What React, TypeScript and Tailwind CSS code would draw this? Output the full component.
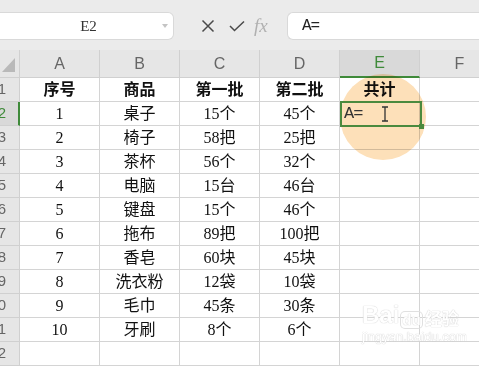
import React from "react";

const cols = ["A", "B", "C", "D", "E", "F"];
const data: string[][] = [
  ["序号", "商品", "第一批", "第二批", "共计", ""],
  ["1", "桌子", "15个", "45个", "", ""],
  ["2", "椅子", "58把", "25把", "", ""],
  ["3", "茶杯", "56个", "32个", "", ""],
  ["4", "电脑", "15台", "46台", "", ""],
  ["5", "键盘", "15个", "46个", "", ""],
  ["6", "拖布", "89把", "100把", "", ""],
  ["7", "香皂", "60块", "45块", "", ""],
  ["8", "洗衣粉", "12袋", "10袋", "", ""],
  ["9", "毛巾", "45条", "30条", "", ""],
  ["10", "牙刷", "8个", "6个", "", ""],
  ["", "", "", "", "", ""],
  ["", "", "", "", "", ""],
];

const serif = { fontFamily: '"Liberation Serif", "Noto Sans CJK SC", serif' };
const sans = { fontFamily: '"Liberation Sans", "Noto Sans", sans-serif' };
const mono = { fontFamily: '"Liberation Mono", "DejaVu Sans Mono", monospace' };

export default function App() {
  return (
    <div className="relative w-[479px] h-[366px] overflow-hidden bg-white" style={sans}>
      {/* top bar */}
      <div className="flex h-[50px] items-start bg-[#ebebeb] pt-[12px]">
        <div className="relative flex h-[28px] w-[174px] items-center justify-center rounded-r-[6px] border border-l-0 border-[#d9d9d9] bg-white text-[15px] text-[#333]" style={serif}>
          <span className="ml-[4px]">E2</span>
          <svg className="absolute right-[5px] top-[11px]" width="6" height="4" viewBox="0 0 6 4">
            <path d="M0 0 L6 0 L3 4 Z" fill="#c4c4c4" />
          </svg>
        </div>
        <div className="flex h-[28px] w-[113px] items-center">
          <svg className="ml-[27px]" width="14" height="14" viewBox="0 0 14 14">
            <path d="M1.5 1.5 L12.5 12.5 M12.5 1.5 L1.5 12.5" stroke="#4a4a4a" strokeWidth="1.5" fill="none" />
          </svg>
          <svg className="ml-[14px]" width="16" height="12" viewBox="0 0 16 12">
            <path d="M1 6 L5.5 10.5 L15 1.5" stroke="#4a4a4a" strokeWidth="1.5" fill="none" />
          </svg>
          <span className="ml-[9px] text-[19px] italic text-[#b0b0b0]" style={serif}>fx</span>
        </div>
        <div className="flex h-[28px] flex-1 items-center rounded-l-[6px] border border-r-0 border-[#d9d9d9] bg-white pl-[14px] text-[16px] text-[#222]" style={mono}>
          <span className="tracking-[-1px]">A=</span>
        </div>
      </div>

      {/* column header */}
      <div className="grid h-[28px] grid-cols-[20px_80px_80px_80px_80px_80px_80px] bg-[#e6e6e6]">
        <div className="relative border-r border-b border-[#d0d0d0]">
          <svg className="absolute left-[2px] top-[8px]" width="14" height="14" viewBox="0 0 14 14">
            <path d="M13 0 L13 14 L0 14 Z" fill="#b9b9b9" />
          </svg>
        </div>
        {cols.map((c) => (
          <div
            key={c}
            className={
              c === "E"
                ? "flex items-center justify-center border-r border-b-2 border-r-[#d0d0d0] border-b-[#3f8a3a] bg-[#d9d9d9] text-[16px] text-[#3f8a3a]"
                : "flex items-center justify-center border-r border-b border-[#d0d0d0] text-[16px] text-[#666]"
            }
          >
            {c}
          </div>
        ))}
      </div>

      {/* rows */}
      <div className="grid grid-cols-[20px_80px_80px_80px_80px_80px_80px]">
        {data.map((row, ri) => (
          <React.Fragment key={ri}>
            <div
              className={
                ri === 1
                  ? "flex h-[24px] items-center justify-end overflow-hidden border-b border-r-2 border-b-[#d0d0d0] border-r-[#3f8a3a] bg-[#d9d9d9] pr-[12px] text-[15px] text-[#3f8a3a]"
                  : "flex h-[24px] items-center justify-end overflow-hidden border-b border-r border-[#d0d0d0] bg-[#e6e6e6] pr-[13px] text-[15px] text-[#666]"
              }
            >
              <span className="whitespace-nowrap">{ri + 1}</span>
            </div>
            {row.map((v, ci) => (
              <div
                key={ci}
                className={
                  "flex h-[24px] items-center justify-center border-r border-b border-[#d4d4d4] text-[16px] text-[#111] " +
                  (ri === 0 ? "font-bold" : "")
                }
                style={serif}
              >
                {v}
              </div>
            ))}
          </React.Fragment>
        ))}
      </div>

      {/* highlight circle */}
      <div className="pointer-events-none absolute left-[340px] top-[74px] h-[86px] w-[86px] rounded-full bg-[#fde0b9] mix-blend-multiply" />

      {/* selected cell */}
      <div className="pointer-events-none absolute left-[340px] top-[101px] h-[26px] w-[82px] border-2 border-[#4b8a3e]">
        <span className="absolute left-[2px] top-[1px] text-[17px] leading-[20px] tracking-[-1px] text-[#333]" style={mono}>A=</span>
        <svg className="absolute left-[39px] top-[3px]" width="8" height="16" viewBox="0 0 8 16">
          <path d="M1 1 L7 1 M4 1 L4 15 M1 15 L7 15" stroke="#333" strokeWidth="1.3" fill="none" />
        </svg>
      </div>
      <div className="pointer-events-none absolute left-[419px] top-[124px] h-[5px] w-[5px] bg-[#4b8a3e]" />

      {/* watermark */}
      <div className="pointer-events-none absolute left-[362px] top-[302px] flex flex-col items-start">
        <div className="flex items-end" style={sans}>
          <span className="text-[24px] font-bold leading-[26px] text-white" style={{ textShadow: "0 0 1px #d0d0d0, 0 0 1px #d0d0d0" }}>Bai</span>
          <span className="ml-[2px] rounded-[4px] px-[1px] text-[15px] font-bold leading-[16px] text-white" style={{ textShadow: "0 0 1px #d0d0d0, 0 0 1px #d0d0d0", boxShadow: "0 0 0 1px #e0e0e0" }}>du</span>
          <span className="ml-[3px] text-[17px] font-bold leading-[20px] text-white" style={{ fontFamily: '"Noto Sans CJK SC", sans-serif', textShadow: "0 0 1px #d0d0d0, 0 0 1px #d0d0d0" }}>经验</span>
        </div>
        <span className="mt-[2px] text-[13px] leading-[14px] text-white" style={{ textShadow: "0 0 1px #d0d0d0, 0 0 1px #d0d0d0" }}>jingyan.baidu.com</span>
      </div>
    </div>
  );
}
